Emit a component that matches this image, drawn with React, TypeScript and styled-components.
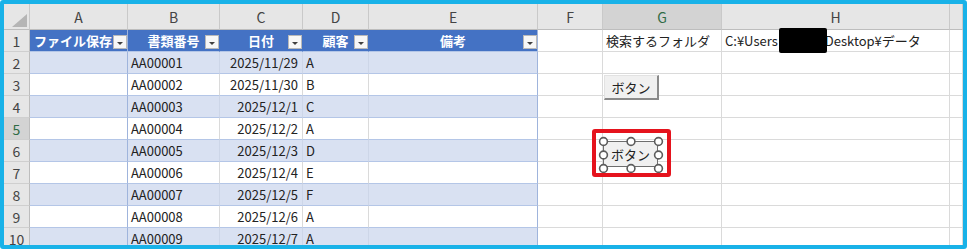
import React from 'react';
import styled, { createGlobalStyle, css } from 'styled-components';

const GlobalStyle = createGlobalStyle`
  html, body {
    margin: 0;
    padding: 0;
    background: #ffffff;
  }
  body {
    font-family: "Noto Sans CJK JP", "Noto Sans", sans-serif;
  }
`;

const Frame = styled.div`
  box-sizing: border-box;
  width: 967px;
  height: 249px;
  border: 4px solid #19b2e8;
  border-radius: 3px;
  overflow: hidden;
  background: #ffffff;
`;

const Sheet = styled.div`
  position: relative;
  display: grid;
  grid-template-columns: 26px 98px 92px 83px 66px 169px 65px 119px 228px 1fr;
  grid-template-rows: 26px repeat(10, 22px);
  font-size: 13px;
  color: #222;
`;

const headerBox = css`
  box-sizing: border-box;
  display: flex;
  align-items: center;
  justify-content: center;
  font-size: 14px;
  border-right: 1px solid #c9c9c9;
  border-bottom: 1px solid #bdbdbd;
`;

const Corner = styled.div`
  ${headerBox};
  background: #e6e6e6;
  align-items: stretch;
  svg {
    display: block;
  }
`;

const ColHeader = styled.div<{ $selected?: boolean }>`
  ${headerBox};
  background: ${(p) => (p.$selected ? '#d3d3d3' : '#e6e6e6')};
  color: ${(p) => (p.$selected ? '#2f6b45' : '#444')};
`;

const RowHeader = styled.div<{ $selected?: boolean }>`
  ${headerBox};
  border-bottom-color: #cfcfcf;
  border-right-color: #bdbdbd;
  background: ${(p) => (p.$selected ? '#d3d3d3' : '#e6e6e6')};
  color: ${(p) => (p.$selected ? '#2f6b45' : '#444')};
`;

type Tone = 'band' | 'plain' | 'sheet';

const toneBg: Record<Tone, string> = {
  band: '#d9e1f2',
  plain: '#ffffff',
  sheet: '#ffffff',
};

const Cell = styled.div<{ $tone: Tone; $align?: 'left' | 'right'; $edge?: boolean }>`
  box-sizing: border-box;
  display: flex;
  align-items: center;
  justify-content: ${(p) => (p.$align === 'right' ? 'flex-end' : 'flex-start')};
  padding: 0 4px 0 3px;
  white-space: nowrap;
  background: ${(p) => toneBg[p.$tone]};
  border-bottom: 1px solid ${(p) => (p.$tone === 'sheet' ? '#dadada' : '#b4c6e7')};
  border-right: 1px solid
    ${(p) => (p.$edge ? '#9fb4dc' : p.$tone === 'band' ? '#cdd6e8' : '#dadada')};
`;

const HeadCell = styled.div<{ $edge?: boolean; $left?: boolean }>`
  position: relative;
  box-sizing: border-box;
  display: flex;
  align-items: center;
  justify-content: ${(p) => (p.$left ? 'flex-start' : 'center')};
  padding-left: ${(p) => (p.$left ? '4px' : '0')};
  background: #4472c4;
  color: #ffffff;
  font-weight: 700;
  white-space: nowrap;
  overflow: hidden;
  border-bottom: 1px solid #b4c6e7;
  border-right: 1px solid ${(p) => (p.$edge ? '#9fb4dc' : '#4472c4')};
`;

const Filter = styled.span`
  position: absolute;
  right: 0;
  bottom: 2px;
  box-sizing: border-box;
  width: 14px;
  height: 14px;
  background: #f7f7f7;
  border: 1px solid #b9b9b9;

  &::after {
    content: '';
    position: absolute;
    left: 3px;
    top: 6px;
    border-left: 3px solid transparent;
    border-right: 3px solid transparent;
    border-top: 3px solid #404040;
  }
`;

const Redacted = styled.span`
  position: relative;
  z-index: 1;
  display: inline-block;
  width: 48px;
  height: 25px;
  margin: -2px -2px -2px 1px;
  background: #000;
  border-radius: 2px;
`;

const FormButton = styled.div`
  position: absolute;
  left: 600px;
  top: 71px;
  box-sizing: border-box;
  width: 55px;
  height: 25px;
  display: flex;
  align-items: center;
  justify-content: center;
  background: #f0f0f0;
  border-top: 1px solid #e2e2e2;
  border-left: 1px solid #e2e2e2;
  border-right: 2px solid #8a8a8a;
  border-bottom: 2px solid #8a8a8a;
  font-size: 13px;
  color: #222;
`;

const SelectedShape = styled.div`
  position: absolute;
  left: 599px;
  top: 137px;
  box-sizing: border-box;
  width: 55px;
  height: 26px;
  display: flex;
  align-items: center;
  justify-content: center;
  background: #f0f0f0;
  border: 1px solid #6e6e6e;
  font-size: 13px;
  color: #222;

  svg {
    position: absolute;
    left: -6px;
    top: -6px;
    overflow: visible;
  }
`;

const Highlight = styled.div`
  position: absolute;
  left: 588px;
  top: 125px;
  box-sizing: border-box;
  width: 79px;
  height: 48px;
  border: 4px solid #e5131d;
  border-radius: 3px;
`;

const letters = ['A', 'B', 'C', 'D', 'E', 'F', 'G', 'H', ''];

const heads = ['ファイル保存', '書類番号', '日付', '顧客', '備考'];

const records = [
  ['AA00001', '2025/11/29', 'A'],
  ['AA00002', '2025/11/30', 'B'],
  ['AA00003', '2025/12/1', 'C'],
  ['AA00004', '2025/12/2', 'A'],
  ['AA00005', '2025/12/3', 'D'],
  ['AA00006', '2025/12/4', 'E'],
  ['AA00007', '2025/12/5', 'F'],
  ['AA00008', '2025/12/6', 'A'],
  ['AA00009', '2025/12/7', 'A'],
];

function Handles() {
  const xs = [5.5, 33, 60.5];
  const ys = [5.5, 19, 32.5];
  const pts: [number, number][] = [];
  ys.forEach((y, yi) =>
    xs.forEach((x, xi) => {
      if (yi === 1 && xi === 1) return;
      pts.push([x, y]);
    })
  );
  return (
    <svg width="67" height="38" viewBox="0 0 67 38">
      {pts.map(([x, y]) => (
        <circle key={`${x}-${y}`} cx={x} cy={y} r="3.9" fill="#ffffff" stroke="#5c5c5c" strokeWidth="1.6" />
      ))}
    </svg>
  );
}

export default function App() {
  return (
    <>
      <GlobalStyle />
      <Frame>
        <Sheet>
          <Corner>
            <svg width="25" height="25" viewBox="0 0 25 25">
              <polygon points="23,10 23,23 8,23" fill="#b5b5b5" />
            </svg>
          </Corner>
          {letters.map((l, i) => (
            <ColHeader key={i} $selected={l === 'G'}>
              {l}
            </ColHeader>
          ))}

          <RowHeader>1</RowHeader>
          {heads.map((h, i) => (
            <HeadCell key={h} $edge={i === 0 || i === 4} $left={i === 0}>
              {h}
              <Filter />
            </HeadCell>
          ))}
          <Cell $tone="sheet" />
          <Cell $tone="sheet">検索するフォルダ</Cell>
          <Cell $tone="sheet">
            C:¥Users
            <Redacted />
            Desktop¥データ
          </Cell>
          <Cell $tone="sheet" />

          {records.map((r, i) => {
            const row = i + 2;
            const tone: Tone = row % 2 === 0 ? 'band' : 'plain';
            return (
              <React.Fragment key={r[0]}>
                <RowHeader $selected={row === 5}>{row}</RowHeader>
                <Cell $tone={tone} $edge />
                <Cell $tone={tone}>{r[0]}</Cell>
                <Cell $tone={tone} $align="right">
                  {r[1]}
                </Cell>
                <Cell $tone={tone}>{r[2]}</Cell>
                <Cell $tone={tone} $edge />
                <Cell $tone="sheet" />
                <Cell $tone="sheet" />
                <Cell $tone="sheet" />
                <Cell $tone="sheet" />
              </React.Fragment>
            );
          })}

          <FormButton>ボタン</FormButton>
          <SelectedShape>
            <Handles />
            ボタン
          </SelectedShape>
          <Highlight />
        </Sheet>
      </Frame>
    </>
  );
}
